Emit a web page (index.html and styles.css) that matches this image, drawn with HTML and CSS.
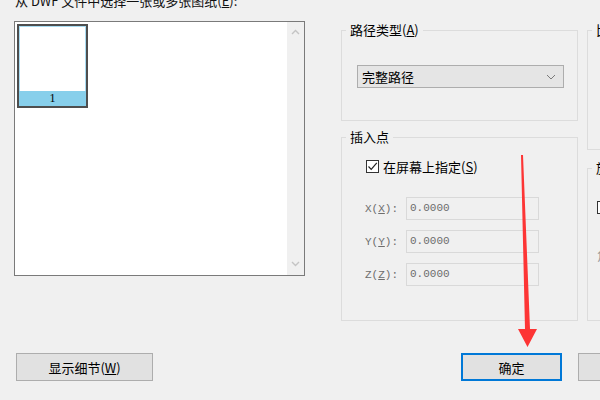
FILE: index.html
```html
<!DOCTYPE html>
<html>
<head>
    <title>附着 DWF 参考底图</title>
    <link rel="stylesheet" href="styles.css">
</head>
<body>
    <div class="caption">从 DWF 文件中选择一张或多张图纸(<u>E</u>):</div>

    <div class="main">
        <div class="sheet-list">
            <div class="sheets">
                <div class="thumb">
                    <div class="thumb-page"></div>
                    <div class="thumb-num">1</div>
                </div>
            </div>
            <div class="scrollbar">
                <svg width="9" height="6" viewBox="0 0 9 6"><path d="M1 5 L4.5 1.5 L8 5" fill="none" stroke="#c4c4c4" stroke-width="1.4"/></svg>
                <svg width="9" height="6" viewBox="0 0 9 6"><path d="M1 1 L4.5 4.5 L8 1" fill="none" stroke="#c4c4c4" stroke-width="1.4"/></svg>
            </div>
        </div>

        <div class="col col-mid">
            <div class="group group-path">
                <div class="group-title">路径类型(<u>A</u>)</div>
                <div class="select">
                    <span>完整路径</span>
                    <svg width="10" height="6" viewBox="0 0 10 6"><path d="M1 1 L5 5 L9 1" fill="none" stroke="#7a7a7a" stroke-width="1"/></svg>
                </div>
            </div>

            <div class="group group-insert">
                <div class="group-title">插入点</div>
                <div class="check-row">
                    <span class="checkbox">
                        <svg width="11" height="11" viewBox="0 0 11 11"><path d="M1.5 5.5 L4.2 8.3 L9.8 1.8" fill="none" stroke="#222" stroke-width="1.2"/></svg>
                    </span>
                    <span>在屏幕上指定(<u>S</u>)</span>
                </div>
                <div class="coords">
                    <div class="coord-row">
                        <span class="coord-label">X(<u>X</u>):</span>
                        <span class="field">0.0000</span>
                    </div>
                    <div class="coord-row">
                        <span class="coord-label">Y(<u>Y</u>):</span>
                        <span class="field">0.0000</span>
                    </div>
                    <div class="coord-row">
                        <span class="coord-label">Z(<u>Z</u>):</span>
                        <span class="field">0.0000</span>
                    </div>
                </div>
            </div>
        </div>

        <div class="col col-right">
            <div class="group group-scale">
                <div class="group-title">比例</div>
            </div>
            <div class="group group-rotate">
                <div class="group-title">旋转</div>
                <div class="check-row side">
                    <span class="checkbox"></span>
                </div>
                <div class="faint">角度</div>
            </div>
        </div>
    </div>

    <div class="footer">
        <button class="btn btn-details">显示细节(<u>W</u>)</button>
        <button class="btn btn-ok">确定</button>
        <button class="btn btn-cancel">取消</button>
    </div>

    <!-- red annotation arrow drawn over the dialog -->
    <svg class="arrow" width="600" height="400" viewBox="0 0 600 400">
        <polygon points="521,155 523,155 530,329 537,329 527.5,347 518,329 525,329" fill="#fd3535"/>
    </svg>
</body>
</html>
```

FILE: styles.css
```css
body {
    margin: 0;
    width: 600px;
    height: 400px;
    overflow: hidden;
    background: #f0f0f0;
    font-family: 'Noto Sans CJK SC', 'DejaVu Sans', sans-serif;
    font-size: 13px;
    color: #000;
    position: relative;
}
u {
    text-decoration: underline;
    text-underline-offset: 1px;
}
.caption {
    height: 15px;
    line-height: 15px;
    margin-top: -7px;
    padding-left: 15px;
    color: #111;
    white-space: nowrap;
}
.main {
    display: flex;
    height: 300px;
    margin-top: 13px;
}
.main > * {
    flex-shrink: 0;
}
.sheet-list {
    display: flex;
    width: 289px;
    height: 253px;
    margin-left: 14px;
    border: 1px solid #7a7a7a;
    background: #fff;
}
.sheets {
    flex: 1;
    padding: 2px 0 0 2px;
}
.thumb {
    width: 67px;
    height: 80px;
    border: 2px solid #4e4e4e;
    display: flex;
    flex-direction: column;
}
.thumb-page {
    flex: 1;
    background: #fff;
    border: 1px solid #a9dcf2;
    border-bottom: none;
}
.thumb-num {
    height: 15px;
    line-height: 15px;
    background: #87cfeb;
    text-align: center;
    font-family: 'Liberation Serif', serif;
    font-size: 12px;
}
.scrollbar {
    width: 17px;
    background: #f0f0f0;
    display: flex;
    flex-direction: column;
    justify-content: space-between;
    align-items: center;
    padding: 7px 0 8px;
}
.col {
    display: flex;
    flex-direction: column;
}
.col-mid {
    width: 237px;
    margin-left: 36px;
}
.col-right {
    width: 60px;
    margin-left: 9px;
}
.group {
    position: relative;
    border: 1px solid #dcdcdc;
    box-sizing: border-box;
    flex-shrink: 0;
}
.group-title {
    position: absolute;
    top: -9px;
    left: 4px;
    padding: 0 4px;
    line-height: 16px;
    background: #f0f0f0;
    white-space: nowrap;
}
.group-path {
    margin-top: 9px;
    height: 91px;
    padding: 34px 0 0 15px;
}
.select {
    width: 207px;
    height: 23px;
    box-sizing: border-box;
    border: 1px solid #adadad;
    background: #e5e5e5;
    display: flex;
    align-items: center;
    justify-content: space-between;
    padding: 0 7px 0 4px;
}
.group-insert {
    margin-top: 16px;
    height: 184px;
    padding: 22px 0 0 24px;
}
.check-row {
    display: flex;
    align-items: center;
    gap: 4px;
    height: 13px;
    white-space: nowrap;
}
.checkbox {
    width: 13px;
    height: 13px;
    box-sizing: border-box;
    border: 1px solid #333;
    background: #fff;
    display: flex;
    align-items: center;
    justify-content: center;
    flex-shrink: 0;
}
.coords {
    display: flex;
    flex-direction: column;
    gap: 10px;
    margin-top: 24px;
    margin-left: -1px;
}
.coord-row {
    display: flex;
    align-items: center;
    height: 23px;
    font-family: 'Liberation Mono', monospace;
    font-size: 11px;
    color: #6d6d6d;
}
.coord-label {
    width: 41px;
    flex-shrink: 0;
}
.field {
    width: 133px;
    height: 23px;
    box-sizing: border-box;
    border: 1px solid #d9d9d9;
    line-height: 21px;
    padding-left: 3px;
    flex-shrink: 0;
}
.group-scale {
    margin-top: 9px;
    height: 120px;
    border-right: none;
}
.group-rotate {
    margin-top: 18px;
    height: 153px;
    border-right: none;
    padding: 31px 0 0 9px;
}
.check-row.side {
    height: 15px;
}
.faint {
    margin-top: 30px;
    color: #9a9a9a;
    white-space: nowrap;
}
.footer {
    display: flex;
    margin-top: 32px;
    padding-left: 16px;
}
.btn {
    height: 28px;
    box-sizing: border-box;
    border: 1px solid #adadad;
    background: #e1e1e1;
    font-family: 'Noto Sans CJK SC', 'DejaVu Sans', sans-serif;
    font-size: 13px;
    color: #000;
    padding: 0;
    flex-shrink: 0;
}
.btn-details {
    width: 137px;
}
.btn-ok {
    width: 101px;
    margin-left: 308px;
    border: 2px solid #0078d7;
}
.btn-cancel {
    width: 100px;
    margin-left: 16px;
}
.arrow {
    position: absolute;
    left: 0;
    top: 0;
    pointer-events: none;
}
```
